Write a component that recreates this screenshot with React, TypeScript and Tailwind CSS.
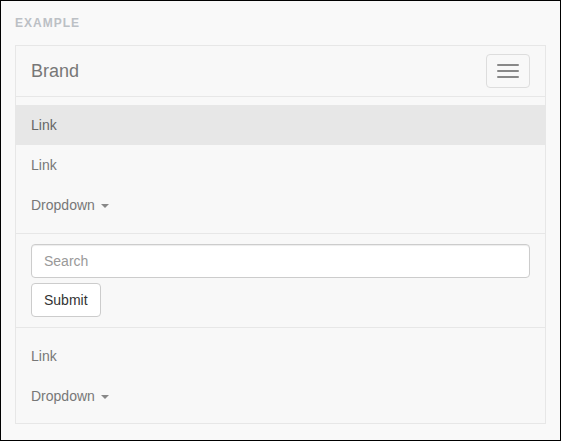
const Caret = () => (
  <span className="ml-[2px] inline-block h-0 w-0 border-x-4 border-t-4 border-x-transparent border-t-[#888] align-middle"></span>
);

const NavLink = ({ label, active, dropdown }: { label: string; active?: boolean; dropdown?: boolean }) => (
  <li>
    <a
      href="#"
      className={
        active
          ? "block bg-[#e7e7e7] px-[15px] py-[10px] leading-[20px] text-[#666]"
          : "block px-[15px] py-[10px] leading-[20px] text-[#777]"
      }
    >
      {label}
      {dropdown && (
        <>
          {" "}
          <Caret />
        </>
      )}
    </a>
  </li>
);

export default function App() {
  return (
    <div
      className="h-[441px] w-[561px] border border-black bg-[#f9f9f9] px-[14px] pt-[13px] text-[14px]"
      style={{ fontFamily: '"Liberation Sans", Arial, sans-serif' }}
    >
      <div className="h-[17px] pt-[1px] text-[12px] font-bold uppercase leading-[17px] tracking-[1px] text-[#bcc0c5]">
        Example
      </div>

      {/* navbar, collapsed (mobile) state */}
      <div className="mt-[14px] border border-[#e7e7e7] bg-[#f8f8f8]">
        <div className="flex h-[50px] items-start justify-between">
          <a href="#" className="px-[15px] py-[15px] text-[18px] leading-[20px] text-[#777]">
            Brand
          </a>
          <button className="mr-[15px] mt-[8px] flex flex-col gap-[4px] rounded-[4px] border border-[#ddd] px-[10px] py-[9px]">
            <span className="block h-[2px] w-[22px] rounded-[1px] bg-[#888]"></span>
            <span className="block h-[2px] w-[22px] rounded-[1px] bg-[#888]"></span>
            <span className="block h-[2px] w-[22px] rounded-[1px] bg-[#888]"></span>
          </button>
        </div>

        <div className="border-t border-[#e7e7e7]">
          <ul className="pb-[8px] pt-[7.5px]">
            <NavLink label="Link" active />
            <NavLink label="Link" />
            <NavLink label="Dropdown" dropdown />
          </ul>

          <form className="border-y border-[#e7e7e7] px-[15px] py-[10px]" onSubmit={(e) => e.preventDefault()}>
            <input
              type="text"
              placeholder="Search"
              className="mb-[5px] block h-[34px] w-full rounded-[4px] border border-[#ccc] bg-white px-[12px] py-[6px] text-[14px] text-[#555] shadow-[inset_0_1px_1px_rgba(0,0,0,0.075)] outline-none placeholder:text-[#999]"
            />
            <button
              type="submit"
              className="h-[34px] rounded-[4px] border border-[#ccc] bg-white px-[12px] py-[6px] leading-[20px] text-[#333]"
            >
              Submit
            </button>
          </form>

          <ul className="pb-[7.5px] pt-[8px]">
            <NavLink label="Link" />
            <NavLink label="Dropdown" dropdown />
          </ul>
        </div>
      </div>
    </div>
  );
}
